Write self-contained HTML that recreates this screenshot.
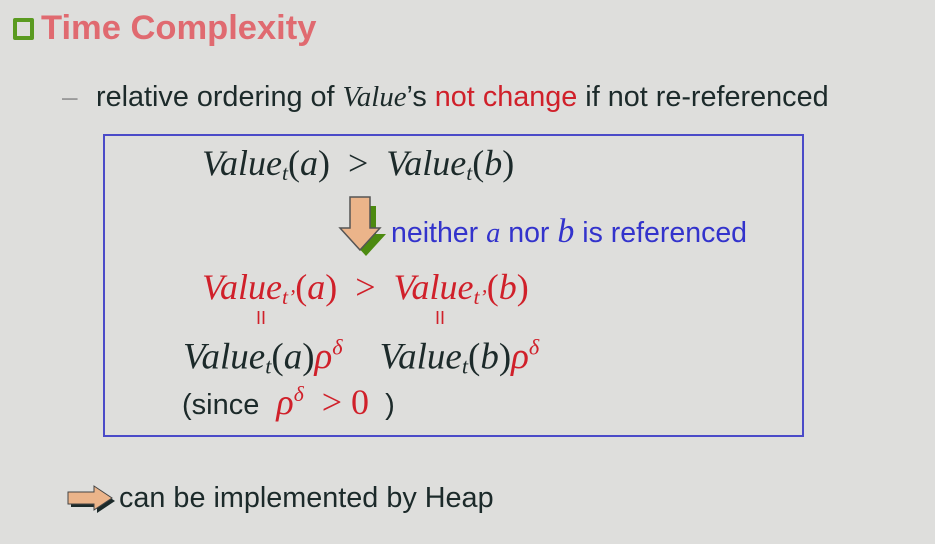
<!DOCTYPE html>
<html><head><meta charset="utf-8"><style>
body{margin:0;width:935px;height:544px;background:#dededc;position:relative;overflow:hidden;font-family:"Liberation Sans",sans-serif;color:#1c2a2a}
.a{position:absolute;white-space:nowrap}
.m{font-family:"Liberation Serif",serif;font-style:italic}
.u{font-style:normal}
.r{color:#d0202a}
sub{font-size:60%;vertical-align:-5px}
</style></head><body>
<div class="a" style="left:13px;top:18px;width:21px;height:22px;border:4px solid #5a9a20;border-radius:2px;box-sizing:border-box"></div>
<div class="a" style="left:41px;top:9px;font-size:34.5px;font-weight:bold;color:#e06a70">Time Complexity</div>
<div class="a" style="left:62px;top:81px;font-size:28px;color:#9a9a9a">–</div>
<div class="a" style="left:96px;top:81px;font-size:28.8px">relative ordering of <span class="m">Value</span>’s <span class="r">not change</span> if not re-referenced</div>
<div class="a" style="left:103px;top:134px;width:701px;height:303px;border:2px solid #4a4ac8;box-sizing:border-box"></div>
<div class="a m" style="left:202px;top:142px;font-size:36px">Value<sub>t</sub><span class="u">(</span>a<span class="u">)</span> &nbsp;<span class="u">&gt;</span>&nbsp; Value<sub>t</sub><span class="u">(</span>b<span class="u">)</span></div>
<svg class="a" style="left:338px;top:194px" width="52" height="66">
<polygon points="18,12 38,12 38,40 48,40 28,62 8,40 18,40" fill="#4c8a10"/>
<polygon points="10,3 30,3 30,34 40,34 20,56 0,34 10,34" fill="#ebb48a" stroke="#555" stroke-width="1.5" transform="translate(2,0)"/>
</svg>
<div class="a" style="left:391px;top:213px;font-size:28.5px;color:#3333cc">neither <span class="m">a</span> nor <span class="m" style="font-size:34px">b</span> is referenced</div>
<div class="a m r" style="left:202px;top:266px;font-size:36px">Value<sub>t’</sub><span class="u">(</span>a<span class="u">)</span> &nbsp;<span class="u">&gt;</span>&nbsp; Value<sub>t’</sub><span class="u">(</span>b<span class="u">)</span></div>
<div class="a r" style="left:256px;top:308px;font-size:18px">II</div>
<div class="a r" style="left:435px;top:308px;font-size:18px">II</div>
<div class="a m" style="left:183px;top:335px;font-size:37px">Value<sub>t</sub><span class="u">(</span>a<span class="u">)</span><span class="r">ρ<sup style="font-size:60%">δ</sup></span> &nbsp;&nbsp; Value<sub>t</sub><span class="u">(</span>b<span class="u">)</span><span class="r">ρ<sup style="font-size:60%">δ</sup></span></div>
<div class="a" style="left:182px;top:381px;font-size:29px">(since <span class="m r" style="font-size:36px">&nbsp;ρ<sup style="font-size:60%">δ</sup> &nbsp;<span class="u">&gt; 0</span></span> &nbsp;)</div>
<svg class="a" style="left:64px;top:484px" width="52" height="32">
<polygon points="4,8 30,8 30,2 48,14 30,26 30,20 4,20" fill="#1c2a2a" transform="translate(3,3)"/>
<polygon points="4,8 30,8 30,2 48,14 30,26 30,20 4,20" fill="#ebb48a" stroke="#444" stroke-width="1"/>
</svg>
<div class="a" style="left:119px;top:482px;font-size:28.8px">can be implemented by Heap</div>
</body></html>
